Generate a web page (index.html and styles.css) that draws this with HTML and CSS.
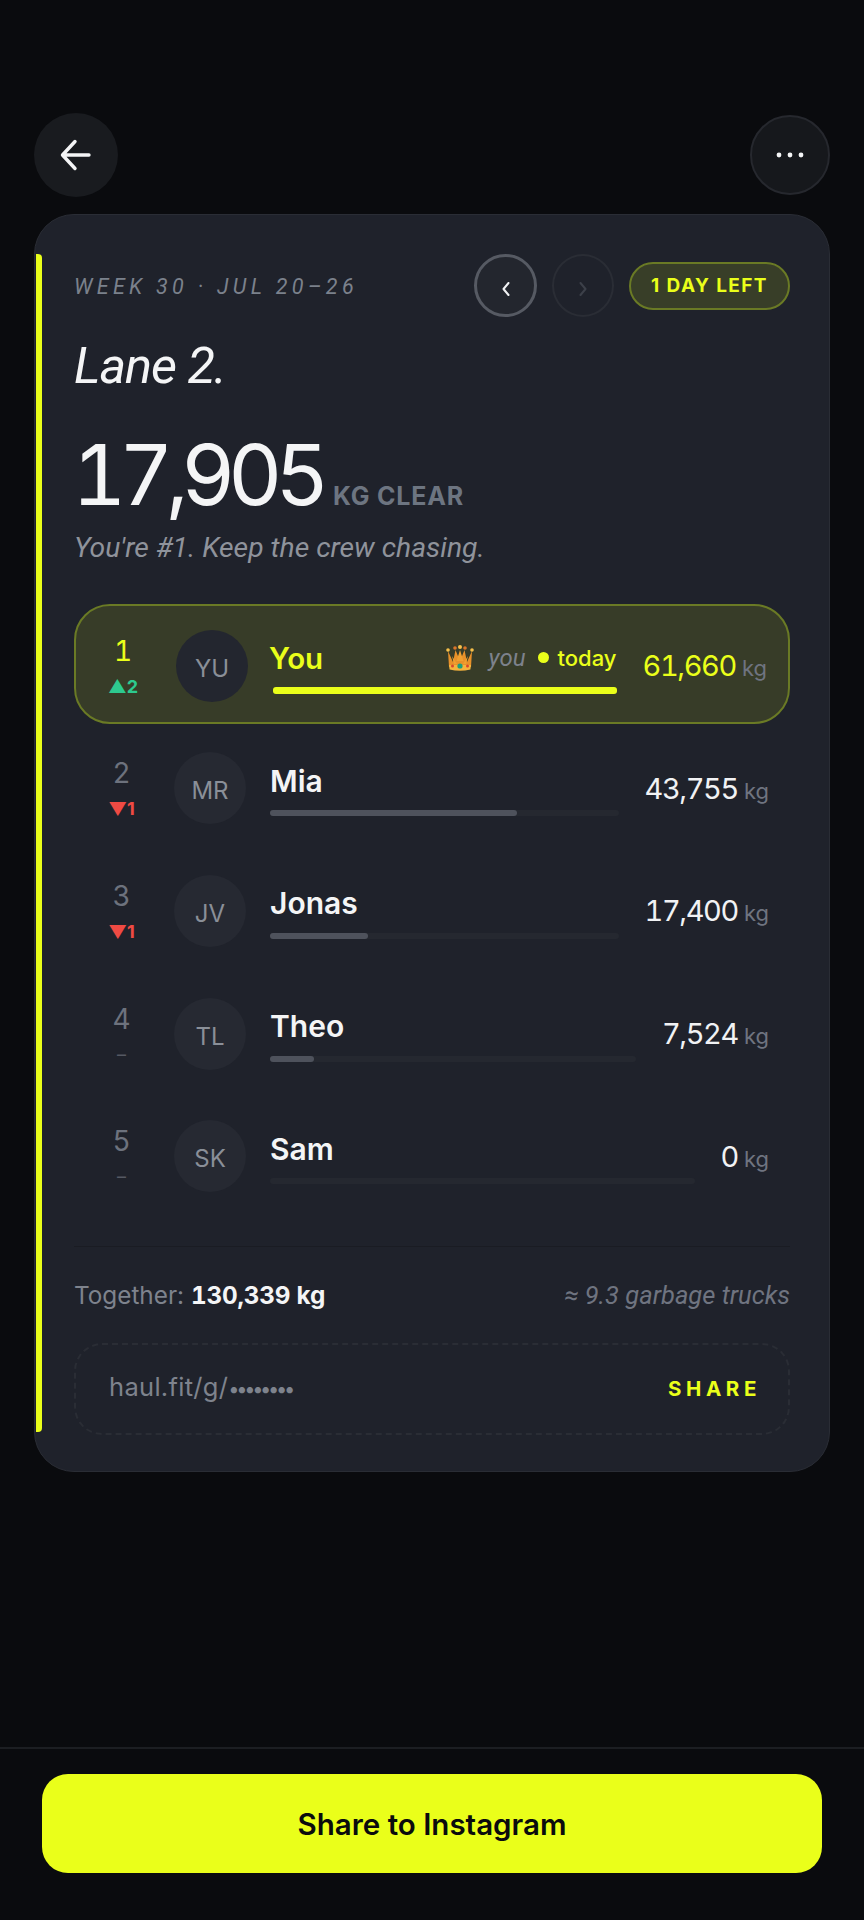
FILE: index.html
```html
<!DOCTYPE html>
<html lang="en">
<head>
<meta charset="utf-8">
<title>Lane 2</title>
<link rel="stylesheet" href="styles.css">
</head>
<body>
<div class="screen">
  <header class="topbar">
    <button class="back" aria-label="Back">
      <svg width="32" height="32" viewBox="0 0 32 32" fill="none" stroke="#f4f5f6" stroke-width="3.4" stroke-linecap="round" stroke-linejoin="round"><path d="M29 16H3M15 2.5 2.5 16 15 29.5"/></svg>
    </button>
    <button class="more" aria-label="More">
      <svg width="30" height="6" viewBox="0 0 30 6" fill="#f4f5f6"><circle cx="4" cy="3" r="2.4"/><circle cx="15" cy="3" r="2.4"/><circle cx="26" cy="3" r="2.4"/></svg>
    </button>
  </header>

  <main class="card">
    <span class="accent"></span>
    <div class="card-head">
      <div class="week">WEEK 30 · JUL 20–26</div>
      <div class="head-right">
        <button class="nav prev" aria-label="Previous"><svg width="10" height="14" viewBox="0 0 10 14" fill="none" stroke="#f1f2f4" stroke-width="2" stroke-linecap="round" stroke-linejoin="round"><path d="M7.5 1 2.5 7l5 6"/></svg></button>
        <button class="nav next" aria-label="Next"><svg width="10" height="14" viewBox="0 0 10 14" fill="none" stroke="#3c4049" stroke-width="2" stroke-linecap="round" stroke-linejoin="round"><path d="M2.5 1l5 6-5 6"/></svg></button>
        <span class="badge">1 DAY LEFT</span>
      </div>
    </div>
    <h1 class="title">Lane 2.</h1>
    <div class="total"><span class="total-num">17,905</span><span class="total-unit">KG CLEAR</span></div>
    <p class="sub">You're #1. Keep the crew chasing.</p>

    <ol class="board">
      <li class="row me">
        <div class="rank"><span class="rank-num">1</span><span class="move up">▲2</span></div>
        <div class="avatar">YU</div>
        <div class="info">
          <div class="name-line">
            <span class="name">You</span>
            <span class="tags">
              <svg class="crown" width="30" height="28" viewBox="0 0 30 28"><path d="M3 7 8 18 10.5 6 15 17 19.500 6 22 18 27 7 26 23H4Z" fill="#e8912a"/><path d="M4 21h22l-.6 4.500q-10.400 2.600-20.800 0Z" fill="#f5b33c"/><path d="M15 6 11.500 17h7ZM7 12l2 8h3ZM23 12l-2 8h-3Z" fill="#f0a030"/><circle cx="3" cy="6" r="1.800" fill="#f7c04a"/><circle cx="10" cy="4" r="1.800" fill="#d9742a"/><circle cx="15" cy="3" r="2" fill="#f7c04a"/><circle cx="20" cy="4" r="1.800" fill="#d9742a"/><circle cx="27" cy="6" r="1.800" fill="#f7c04a"/><circle cx="15" cy="22" r="2.600" fill="#1f9d7c"/><circle cx="7.500" cy="22" r="1.500" fill="#d8452e"/><circle cx="22.500" cy="22" r="1.500" fill="#d8452e"/></svg>
              <span class="you">you</span>
              <span class="today"><i class="dot"></i>today</span>
            </span>
          </div>
          <div class="track"><div class="fill" style="width:100%"></div></div>
        </div>
        <div class="value"><span class="num">61,660</span><span class="kg">kg</span></div>
      </li>
      <li class="row">
        <div class="rank"><span class="rank-num">2</span><span class="move down">▼1</span></div>
        <div class="avatar">MR</div>
        <div class="info"><div class="name-line"><span class="name">Mia</span></div><div class="track"><div class="fill" style="width:71%"></div></div></div>
        <div class="value"><span class="num">43,755</span><span class="kg">kg</span></div>
      </li>
      <li class="row">
        <div class="rank"><span class="rank-num">3</span><span class="move down">▼1</span></div>
        <div class="avatar">JV</div>
        <div class="info"><div class="name-line"><span class="name">Jonas</span></div><div class="track"><div class="fill" style="width:28%"></div></div></div>
        <div class="value"><span class="num">17,400</span><span class="kg">kg</span></div>
      </li>
      <li class="row">
        <div class="rank"><span class="rank-num">4</span><span class="move same">–</span></div>
        <div class="avatar">TL</div>
        <div class="info"><div class="name-line"><span class="name">Theo</span></div><div class="track"><div class="fill" style="width:12%"></div></div></div>
        <div class="value"><span class="num">7,524</span><span class="kg">kg</span></div>
      </li>
      <li class="row">
        <div class="rank"><span class="rank-num">5</span><span class="move same">–</span></div>
        <div class="avatar">SK</div>
        <div class="info"><div class="name-line"><span class="name">Sam</span></div><div class="track"><div class="fill" style="width:0"></div></div></div>
        <div class="value"><span class="num">0</span><span class="kg">kg</span></div>
      </li>
    </ol>

    <div class="together">
      <span class="together-left">Together: <b>130,339 kg</b></span>
      <span class="trucks">≈ 9.3 garbage trucks</span>
    </div>
    <div class="link-box">
      <span class="link">haul.fit/g/<span class="link-dots">••••••••</span></span>
      <span class="share-link">SHARE</span>
    </div>
  </main>

  <footer class="footer">
    <button class="cta">Share to Instagram</button>
  </footer>
</div>
</body>
</html>
```
FILE: styles.css
```css
* { box-sizing: border-box; margin: 0; padding: 0; }
html, body { height: 100%; }
body { background: #0a0b0e; font-family: Inter, "Liberation Sans", sans-serif; color: #f4f5f6; }
button { font: inherit; color: inherit; border: 0; background: none; }
.screen { height: 1920px; width: 864px; display: flex; flex-direction: column; }

.topbar { display: flex; justify-content: space-between; align-items: center; padding: 113px 34px 0; height: 197px; }
.back { width: 84px; height: 84px; border-radius: 50%; background: #191b1f; display: flex; align-items: center; justify-content: center; }
.more { width: 80px; height: 80px; border-radius: 50%; background: #16181c; border: 2px solid #26282e; display: flex; align-items: center; justify-content: center; }

.card { position: relative; margin: 17px 34px 0; height: 1258px; background: #1f222b; border: 1px solid #2a2d35; border-radius: 40px; padding: 39px 39px 0; }
.accent { position: absolute; left: 1px; top: 39px; bottom: 39px; width: 6px; background: #eaff1a; border-radius: 0 4px 4px 0; }

.card-head { display: flex; justify-content: space-between; align-items: center; height: 63px; }
.week { font: italic 400 21.5px Roboto, sans-serif; letter-spacing: 4.3px; color: #7b818c; padding-top: 1px; }
.head-right { display: flex; align-items: center; gap: 15px; }
.nav { width: 63px; height: 63px; border-radius: 50%; display: flex; align-items: center; justify-content: center; padding-top: 6px; }
.prev { border: 3px solid #565a63; background: #23262e; }
.next { border: 2px solid #2a2d35; width: 62px; }
.badge { height: 48px; width: 161px; display: flex; align-items: center; justify-content: center; border-radius: 24px; background: #383e28; border: 2px solid #6a7a25; color: #eaff1a; font-weight: 700; font-size: 19px; letter-spacing: 1.4px; }

.title { font: italic 400 50.5px/60px Roboto, sans-serif; letter-spacing: -1px; color: #f4f5f6; margin-top: 19px; }
.total { display: flex; align-items: baseline; margin-top: 33px; }
.total-num { font-size: 84px; line-height: 92px; font-weight: 400; letter-spacing: -7.5px; color: #f4f5f6; font-variant-numeric: tabular-nums; margin-left: -2px; }
.total-unit { font-size: 25px; font-weight: 700; letter-spacing: .8px; color: #6d7581; margin-left: 11px; }
.sub { font: italic 400 28.3px/38px Roboto, sans-serif; color: #8f939b; margin-top: 8px; }

.board { list-style: none; margin-top: 37px; display: flex; flex-direction: column; gap: 2.7px; }
.row { height: 120px; display: flex; align-items: center; padding: 3px 19px 0 0; border: 2px solid transparent; border-radius: 36px; }
.me { background: #373c28; border-color: #6a7a25; padding-right: 21px; }
.rank { width: 91px; display: flex; flex-direction: column; align-items: center; color: #6d727d; }
.rank-num { font-size: 28px; line-height: 34px; font-weight: 400; font-variant-numeric: tabular-nums; }
.move { font-size: 18px; line-height: 22px; font-weight: 700; margin-top: 8px; }
.up { color: #2dc98f; }
.down { color: #ef4a43; }
.same { color: #555963; font-weight: 400; }
.avatar { width: 72px; height: 72px; margin-left: 7px; border-radius: 50%; background: #262932; color: #8a8f98; font-size: 24px; display: flex; align-items: center; justify-content: center; padding-top: 5px; flex: none; }
.info { flex: 1; min-width: 0; margin-left: 24px; }
.name-line { display: flex; align-items: center; justify-content: space-between; height: 38px; padding-top: 3px; }
.name { font-size: 30px; font-weight: 600; color: #f4f5f6; }
.track { height: 6px; border-radius: 3px; background: #252830; margin-top: 12px; }
.fill { height: 100%; border-radius: 3px; background: #4e525c; }
.value { margin-left: 26px; display: flex; align-items: baseline; gap: 6px; flex: none; }
.num { font-size: 29px; color: #f1f2f4; letter-spacing: -1.4px; font-variant-numeric: tabular-nums; }
.kg { font-size: 22px; color: #6f7480; }

.me .rank { width: 94px; }
.me .avatar { background: #23262f; margin-left: 6px; }
.me .info { margin-left: 21px; }
.me .rank-num { color: #eaff1a; }
.me .name { color: #eaff1a; font-size: 29.5px; }
.me .track { height: 7px; background: none; margin-left: 4px; }
.me .fill { background: #eaff1a; }
.me .num { color: #eaff1a; }
.tags { display: flex; align-items: center; }
.crown { margin-right: 14px; }
.you { font: italic 400 24px Roboto, sans-serif; color: #7d828c; margin-right: 12px; }
.today { display: flex; align-items: center; color: #eaff1a; font-size: 22px; font-weight: 500; }
.dot { width: 11px; height: 11px; border-radius: 50%; background: #eaff1a; margin-right: 9px; }

.together { display: flex; justify-content: space-between; align-items: center; margin-top: 31px; border-top: 1px solid #1a1c23; height: 97px; }
.together-left { font-size: 24.3px; color: #7e838d; }
.together-left b { color: #f4f5f6; font-weight: 700; font-variant-numeric: tabular-nums; letter-spacing: -.2px; }
.trucks { font: italic 400 25.5px Roboto, sans-serif; color: #6f7480; }
.link-box { height: 92px; border: 2px dashed #2a2d35; border-radius: 28px; display: flex; align-items: center; justify-content: space-between; padding: 0 27px 0 33px; }
.link { font-size: 25.5px; letter-spacing: .3px; color: #7e838d; margin-bottom: 5px; }
.link-dots { font-size: 20px; letter-spacing: -3.3px; }
.share-link { color: #eaff1a; font-weight: 700; font-size: 20.5px; letter-spacing: 4.6px; }

.footer { margin-top: auto; height: 173px; border-top: 2px solid #1c1e22; padding: 25px 42px 0; }
.cta { width: 780px; height: 99px; border-radius: 26px; background: #eaff1a; color: #0b0c0d; font-size: 29.5px; font-weight: 600; }
```
